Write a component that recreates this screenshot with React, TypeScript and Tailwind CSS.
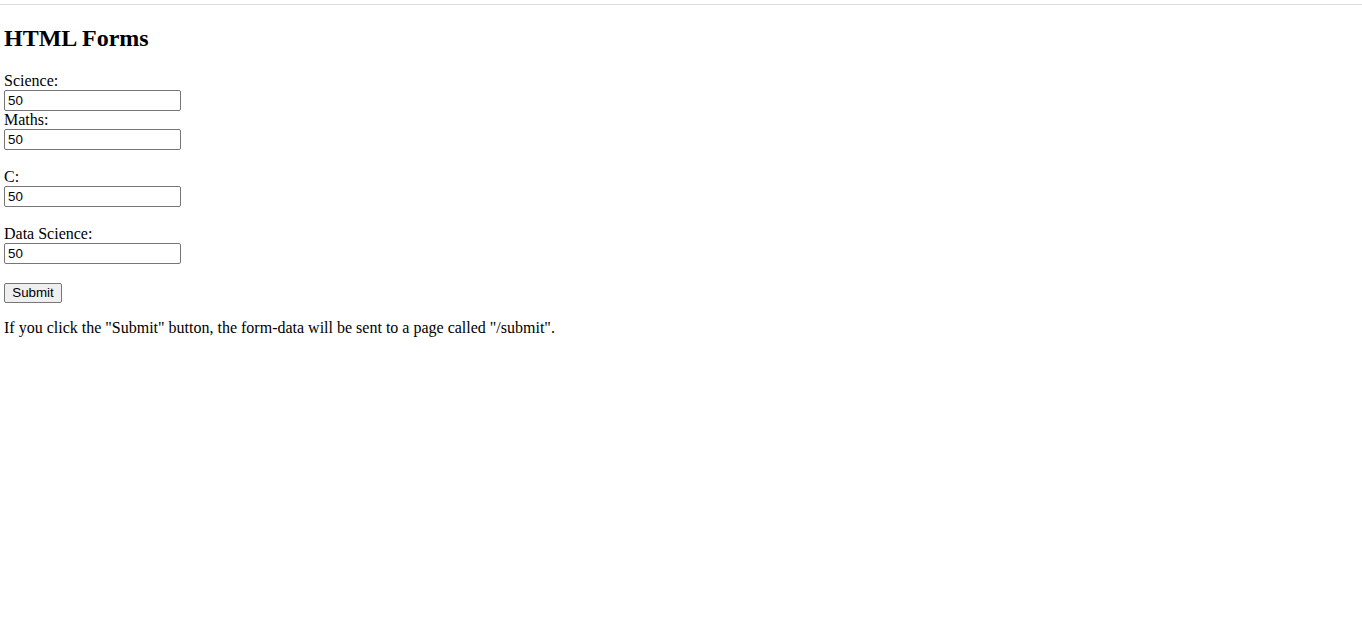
export default function App() {
  const fields = [
    { label: "Science:", gap: false },
    { label: "Maths:", gap: false },
    { label: "C:", gap: true },
    { label: "Data Science:", gap: true },
  ];

  return (
    <div className="min-h-screen bg-white text-black font-['Liberation_Serif',serif]">
      <div className="h-[4px]" />
      <div className="h-px bg-[#dcdcdc]" />

      <div className="px-[4px]">
        <h2 className="mt-[19px] text-[24px] leading-[28px] font-bold">HTML Forms</h2>

        <form className="mt-[20px]" onSubmit={(e) => e.preventDefault()}>
          {fields.map((f) => (
            <div key={f.label} className={f.gap ? "pt-[18px]" : ""}>
              <div className="text-[16px] leading-[18px]">{f.label}</div>
              <input
                type="text"
                defaultValue="50"
                className="block w-[177px] h-[21px] border border-[#767676] rounded-[2px] px-[3px] text-[13.33px] font-['Liberation_Sans',sans-serif] outline-none"
              />
            </div>
          ))}

          <button
            type="submit"
            className="mt-[19px] block w-[58px] h-[20px] bg-[#efefef] border border-[#767676] rounded-[2px] text-[13.33px] leading-[16px] font-['Liberation_Sans',sans-serif]"
          >
            Submit
          </button>
        </form>

        <p className="mt-[16px] text-[16px] leading-[18px]">
          If you click the "Submit" button, the form-data will be sent to a page called "/submit".
        </p>
      </div>
    </div>
  );
}
